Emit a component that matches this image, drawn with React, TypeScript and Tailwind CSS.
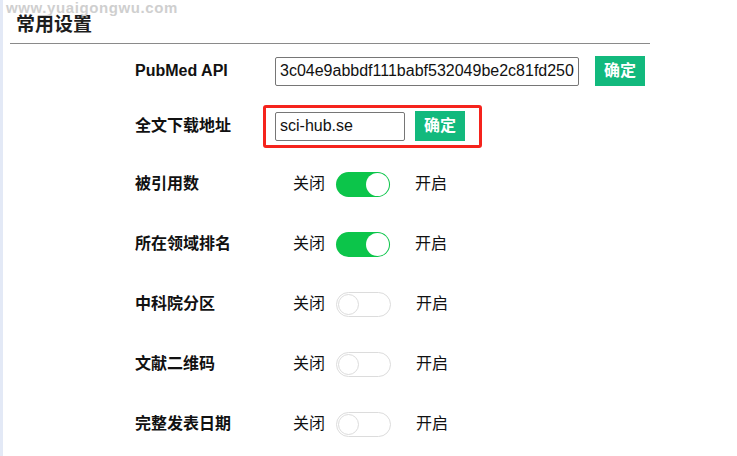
import React from "react";

const font = { fontFamily: '"Liberation Sans", Arial, "Noto Sans CJK SC", sans-serif' };

function Toggle({ on }: { on: boolean }) {
  return on ? (
    <div className="relative w-[54px] h-[25px] rounded-full bg-[#0cc54a]">
      <div className="absolute right-[1px] top-[1px] w-[23px] h-[23px] rounded-full bg-white" />
    </div>
  ) : (
    <div className="relative w-[55px] h-[25px] rounded-full border border-[#dcdcdc] bg-white">
      <div className="absolute left-[1px] top-[1px] w-[21px] h-[21px] rounded-full border border-[#dcdcdc] bg-white" />
    </div>
  );
}

const toggles: [string, boolean][] = [
  ["被引用数", true],
  ["所在领域排名", true],
  ["中科院分区", false],
  ["文献二维码", false],
  ["完整发表日期", false],
];

export default function App() {
  return (
    <div
      className="relative w-[737px] h-[456px] overflow-hidden bg-white border-l-[3px] border-[#e3e9f6] text-[#111]"
      style={font}
    >
      <div className="absolute left-[3px] top-[1px] h-[13px] leading-[13px] text-[15px] font-bold text-[#cfcfcf] tracking-[0.6px] select-none">
        www.yuaigongwu.com
      </div>
      <div className="pl-[13px] pt-[14px] h-[43px]">
        <div className="text-[19px] font-bold leading-[21px] text-[#1d1d1d]">常用设置</div>
      </div>
      <div className="ml-[7px] w-[640px] h-px bg-[#8a8a8a]" />

      <div className="pl-[132px]">
        <div className="flex items-center h-[54px]">
          <div className="w-[140px] text-[16px] font-bold">PubMed API</div>
          <input
            readOnly
            value="3c04e9abbdf111babf532049be2c81fd2509"
            className="w-[304px] h-[29px] border border-[#767676] rounded-[2px] px-[4px] text-[16px] text-[#111] outline-none"
            style={font}
          />
          <button className="ml-[16px] w-[50px] h-[30px] bg-[#12b97d] text-white text-[16px] font-bold">确定</button>
        </div>

        <div className="flex items-center h-[56px]">
          <div className="w-[128px] text-[16px] font-bold">全文下载地址</div>
          <div className="flex items-center h-[43px] border-[3px] border-[#f5231c] rounded-[3px] pl-[9px] pr-[14px]">
            <input
              readOnly
              value="sci-hub.se"
              className="w-[130px] h-[29px] border border-[#767676] rounded-[2px] px-[4px] text-[16px] text-[#111] outline-none"
              style={font}
            />
            <button className="ml-[10px] w-[50px] h-[30px] bg-[#12b97d] text-white text-[16px] font-bold">确定</button>
          </div>
        </div>

        {toggles.map(([label, on]) => (
          <div key={label} className="flex items-center h-[60px]">
            <div className="w-[158px] text-[16px] font-bold">{label}</div>
            <div className="text-[16px]">关闭</div>
            <div className="ml-[11px]">
              <Toggle on={on} />
            </div>
            <div className="ml-[25px] text-[16px]">开启</div>
          </div>
        ))}
      </div>
    </div>
  );
}
